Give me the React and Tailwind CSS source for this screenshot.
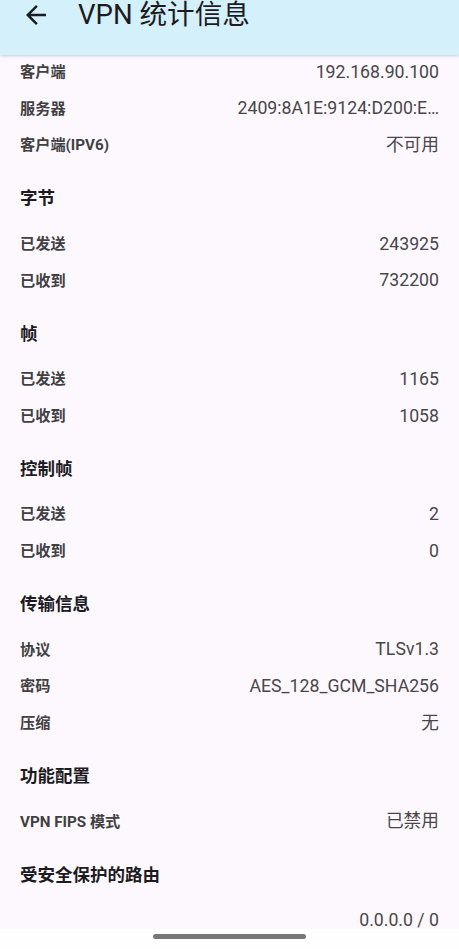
import React from "react";

const FONT = { fontFamily: "Roboto, 'Noto Sans CJK SC', 'Noto Sans', sans-serif" };

function Row({ label, value }) {
  return (
    <div className="h-[36.75px] shrink-0 flex items-center justify-between pl-[20px] pr-[20px] pt-[2px]">
      <span className="text-[15.2px] font-bold text-[#404043] leading-none">{label}</span>
      <span className="text-[17.7px] text-[#48464b] leading-none">{value}</span>
    </div>
  );
}

function Header({ title }) {
  return (
    <div className="h-[61.75px] shrink-0 pt-[23px] pl-[20px]">
      <div className="text-[17.5px] font-bold text-[#1c1b1f] leading-[24px]">{title}</div>
    </div>
  );
}

export default function App() {
  return (
    <div style={FONT} className="w-[459px] h-[949px] flex flex-col overflow-hidden bg-[#fdf8fd]">
      <div className="h-[55px] shrink-0 bg-[#d4f0fb] relative z-10 shadow-[0_1px_3px_rgba(0,0,0,0.18)]">
        <div className="h-[30px] flex items-center">
          <svg className="ml-[21px] shrink-0" width="30" height="30" viewBox="0 0 24 24" fill="#1c1b1f">
            <path d="M20 11H7.83l5.59-5.59L12 4l-8 8 8 8 1.41-1.41L7.83 13H20v-2z" />
          </svg>
          <span className="ml-[27px] text-[27.6px] text-[#1c1b1f] leading-[30px]">VPN 统计信息</span>
        </div>
      </div>
      <div className="flex-1 flex flex-col overflow-hidden -mt-[2px]">
        <Row label="客户端" value="192.168.90.100" />
        <Row label="服务器" value="2409:8A1E:9124:D200:E…" />
        <Row label="客户端(IPV6)" value="不可用" />
        <Header title="字节" />
        <Row label="已发送" value="243925" />
        <Row label="已收到" value="732200" />
        <Header title="帧" />
        <Row label="已发送" value="1165" />
        <Row label="已收到" value="1058" />
        <Header title="控制帧" />
        <Row label="已发送" value="2" />
        <Row label="已收到" value="0" />
        <Header title="传输信息" />
        <Row label="协议" value="TLSv1.3" />
        <Row label="密码" value="AES_128_GCM_SHA256" />
        <Row label="压缩" value="无" />
        <Header title="功能配置" />
        <Row label="VPN FIPS 模式" value="已禁用" />
        <Header title="受安全保护的路由" />
        <Row label="" value="0.0.0.0 / 0" />
      </div>
      <div className="h-[20px] shrink-0 bg-[#fefefe] flex justify-center pt-[5px]">
        <div className="w-[153px] h-[5px] rounded-full bg-[#777777]" />
      </div>
    </div>
  );
}
